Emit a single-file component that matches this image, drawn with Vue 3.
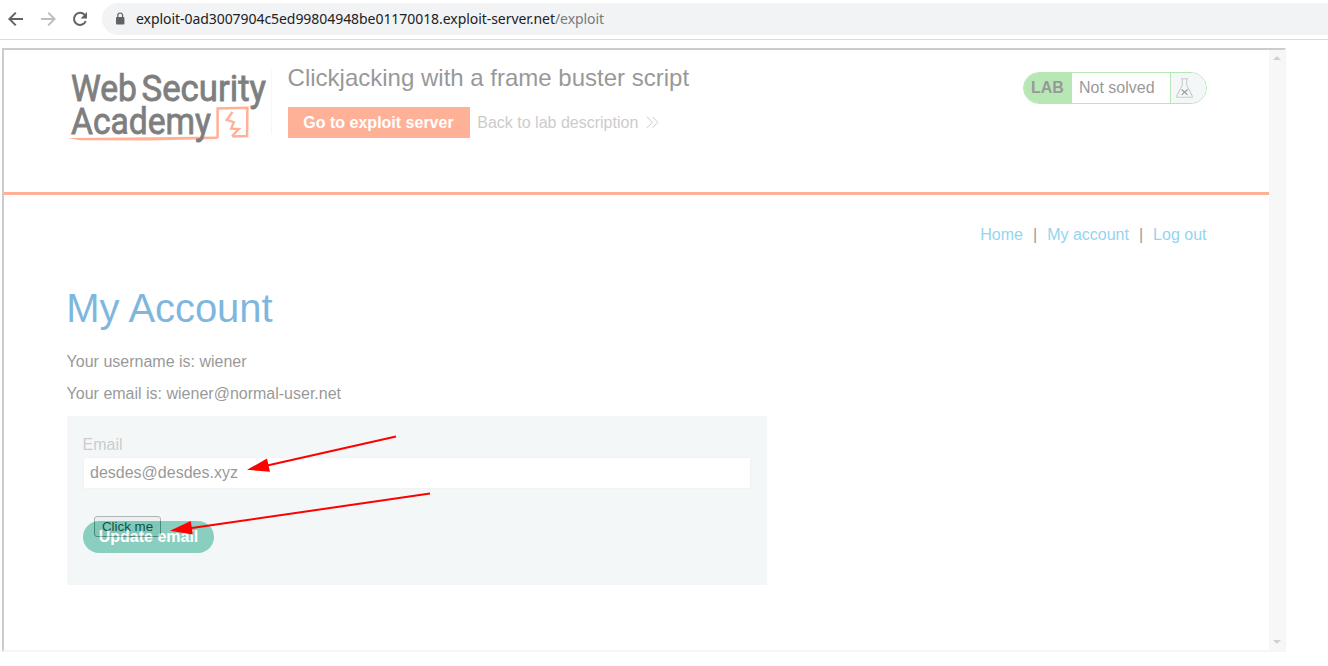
<script setup>
const links = ['Home', 'My account', 'Log out']
const host = 'exploit-0ad3007904c5ed99804948be01170018.exploit-server.net'
const email = 'desdes@desdes.xyz'
</script>

<template>
  <div class="browser">
    <div class="toolbar">
      <svg class="nav" width="102" height="39" viewBox="0 0 102 39">
        <path d="M23 19H10M15.8 12.6 9.4 19l6.4 6.4" fill="none" stroke="#5f6368" stroke-width="2" />
        <path d="M41 19h13M48.2 12.6l6.4 6.4-6.4 6.4" fill="none" stroke="#bbbdbf" stroke-width="2" />
        <path d="M84.6 14.7A6.1 6.1 0 1 0 85.8 21" fill="none" stroke="#5f6368" stroke-width="2" />
        <path d="M87 12v6.4h-6.4z" fill="#5f6368" />
      </svg>
      <div class="omnibox">
        <svg width="10" height="14" viewBox="0 0 10 14">
          <rect x="1" y="5" width="8.4" height="7.4" rx="1" fill="#5f6368" />
          <path d="M2.8 5.5V3.4a2.4 2.4 0 0 1 4.8 0v2.1" fill="none" stroke="#5f6368" stroke-width="1.2" />
        </svg>
        <span class="url">{{ host }}<i>/exploit</i></span>
      </div>
    </div>

    <div class="stage">
      <button class="decoy">Click me</button>

      <div class="frame">
        <div class="page">
          <header>
            <svg class="logo" width="203" height="78" viewBox="67 67 203 78">
              <path d="M67.5 138 130 137.6 217.5 136.6V138.9L150 140.4 80 140.2z" fill="#ff6633" />
              <path d="M217.6 138V108.4L247.4 107.8 247 136 232.5 136.4" fill="none" stroke="#ff6633" stroke-width="2.5" />
              <path d="M232.5 112 226.8 119.8 233.8 122.2 231.2 128.6 238.8 129 232 136.2" fill="none" stroke="#ff6633" stroke-width="2.4" />
              <g class="wordmark">
                <text x="71" y="100.5" textLength="66" lengthAdjust="spacingAndGlyphs">Web</text>
                <text x="141.5" y="100.5" textLength="124.5" lengthAdjust="spacingAndGlyphs">Security</text>
                <text x="71" y="133.6" textLength="140" lengthAdjust="spacingAndGlyphs">Academy</text>
              </g>
            </svg>
            <div class="title">
              <h2>Clickjacking with a frame buster script</h2>
              <div class="actions">
                <a class="exploit">Go to exploit server</a>
                <a class="back">Back to lab description</a>
                <svg width="13" height="13" viewBox="0 0 13 13" fill="none" stroke="#999" stroke-width="1">
                  <path d="M1 .8 6.3 6.3 1 11.8M6.5.8l5.3 5.5-5.3 5.5" />
                </svg>
              </div>
            </div>
            <div class="status">
              <b>LAB</b>
              <span>Not solved</span>
              <div class="flask">
                <svg width="17" height="20" viewBox="0 0 17 20" fill="none" stroke="#999" stroke-width="1.1">
                  <path d="M5 .7h7M6.3.7v6.5L.8 18v1.3h15.4V18L10.7 7.2V.7" />
                  <path d="M5.6 11.5l6 5.4M11.6 11.5l-6 5.4" stroke="#333" />
                </svg>
              </div>
            </div>
          </header>

          <main>
            <nav>
              <template v-for="(l, i) in links" :key="l">
                <span v-if="i">|</span>
                <a>{{ l }}</a>
              </template>
            </nav>
            <h1>My Account</h1>
            <p>Your username is: wiener</p>
            <p>Your email is: wiener@normal-user.net</p>
            <form @submit.prevent>
              <label>Email</label>
              <div class="field">{{ email }}</div>
              <button class="update">Update email</button>
            </form>
          </main>
        </div>
        <div class="scroll">
          <svg width="8" height="4" viewBox="0 0 8 4"><path d="M0 4 4 0l4 4z" fill="#a3a3a3" /></svg>
          <svg width="8" height="4" viewBox="0 0 8 4"><path d="M0 0h8L4 4z" fill="#a3a3a3" /></svg>
        </div>
      </div>
    </div>

    <svg class="arrows" width="1328" height="666" viewBox="0 0 1328 666">
      <path d="M396 436.6 265 466M430 493.6 190 528.2" stroke="red" stroke-width="2" />
      <path d="M247 469.8 267 458.6 270 471.8zM170 530.8 190.8 521 192.8 534.6z" fill="red" />
    </svg>
  </div>
</template>

<style>
body { margin: 0; background: #fff; }
</style>

<style scoped>
* { box-sizing: border-box; }
.browser { position: relative; width: 1328px; height: 666px; overflow: hidden; font: 16px/20px "Liberation Sans", Arial, sans-serif; }
.toolbar { display: flex; height: 40px; border-bottom: 1px solid #dadce0; }
.nav { flex: none; }
.omnibox { flex: 1; display: flex; align-items: center; gap: 11px; height: 32px; margin-top: 3px; padding-left: 13px; background: #f1f3f4; border-radius: 16px 0 0 16px; }
.url { font: 14px/20px "Noto Sans", sans-serif; letter-spacing: -.056px; color: #202124; white-space: nowrap; }
.url i { font-style: normal; color: #777a7e; }
.stage { position: relative; padding: 8px 0 0 2px; }
.decoy { position: absolute; left: 94px; top: 476px; width: 67px; height: 21px; padding: 0; background: #efefef; border: 1px solid #767676; border-radius: 3px; font: 13.333px/18px "Liberation Sans", Arial, sans-serif; color: #000; }
.frame { position: relative; display: flex; width: 1284px; height: 604px; border: 2px solid; border-color: #9a9a9a #eee #eee #9a9a9a; opacity: .5; background: #fff; color: #333; }
.page { flex: 1; }
.scroll { width: 15px; background: #f1f1f1; display: flex; flex-direction: column; justify-content: space-between; align-items: center; padding: 6px 0; }
header { display: flex; height: 145px; border-bottom: 3px solid #ff6633; padding-left: 63px; }
.logo { flex: none; margin-top: 17px; overflow: visible; }
.wordmark { font: 400 37.5px Roboto, sans-serif; fill: #000; stroke: #000; stroke-width: .9px; }
.title { flex: 1; height: 64px; margin: 20px 0 0 1px; padding-left: 16px; border-left: 1px solid #eee; }
h2 { margin: -6px 0 0 -.4px; font-size: 24px; line-height: 28px; font-weight: 400; }
.actions { display: flex; align-items: center; margin-top: 15px; }
.exploit { width: 182px; height: 31px; padding-right: 1px; line-height: 31px; text-align: center; background: #ff6633; color: #fff; font-weight: 700; }
.back { margin: 0 8px 0 7.3px; color: #999; }
.status { display: flex; width: 184px; height: 32px; margin: 22px 62px 0 0; border: 1px solid #71d16b; border-radius: 16px; overflow: hidden; line-height: 30px; }
.status b { width: 48px; padding-left: 7px; background: #71d16b; }
.status span { flex: 1; padding-left: 7px; }
.flask { width: 36px; border-left: 1px solid #71d16b; background: #e9f0f3; padding: 5px 0 0 5px; line-height: 0; }
main { padding: 0 62px 0 63px; }
nav { display: flex; justify-content: flex-end; gap: 10px; padding-top: 30px; margin-right: .5px; }
nav a { color: #29abe2; }
h1 { margin: 40px 0 0 -.7px; font-size: 40px; line-height: 46px; font-weight: 400; letter-spacing: -.05px; color: #0071bc; }
p { margin: 21px 0 0 -.4px; }
p + p { margin-top: 12px; }
form { width: 700px; height: 169px; margin-top: 12px; padding: 19px 16px 0; background: #e9f1f3; }
label { display: block; margin-left: -.4px; color: #999; }
.field { width: 668px; height: 32px; margin-top: 2px; padding-left: 6px; border: 1px solid #e5e8e9; background: #fff; line-height: 30px; }
.update { display: block; width: 131px; height: 32px; margin-top: 32px; padding: 0; border: 0; border-radius: 16px; background: #159f80; color: #fff; font: 700 16px/32px "Liberation Sans", Arial, sans-serif; }
.arrows { position: absolute; left: 0; top: 0; pointer-events: none; }
</style>
